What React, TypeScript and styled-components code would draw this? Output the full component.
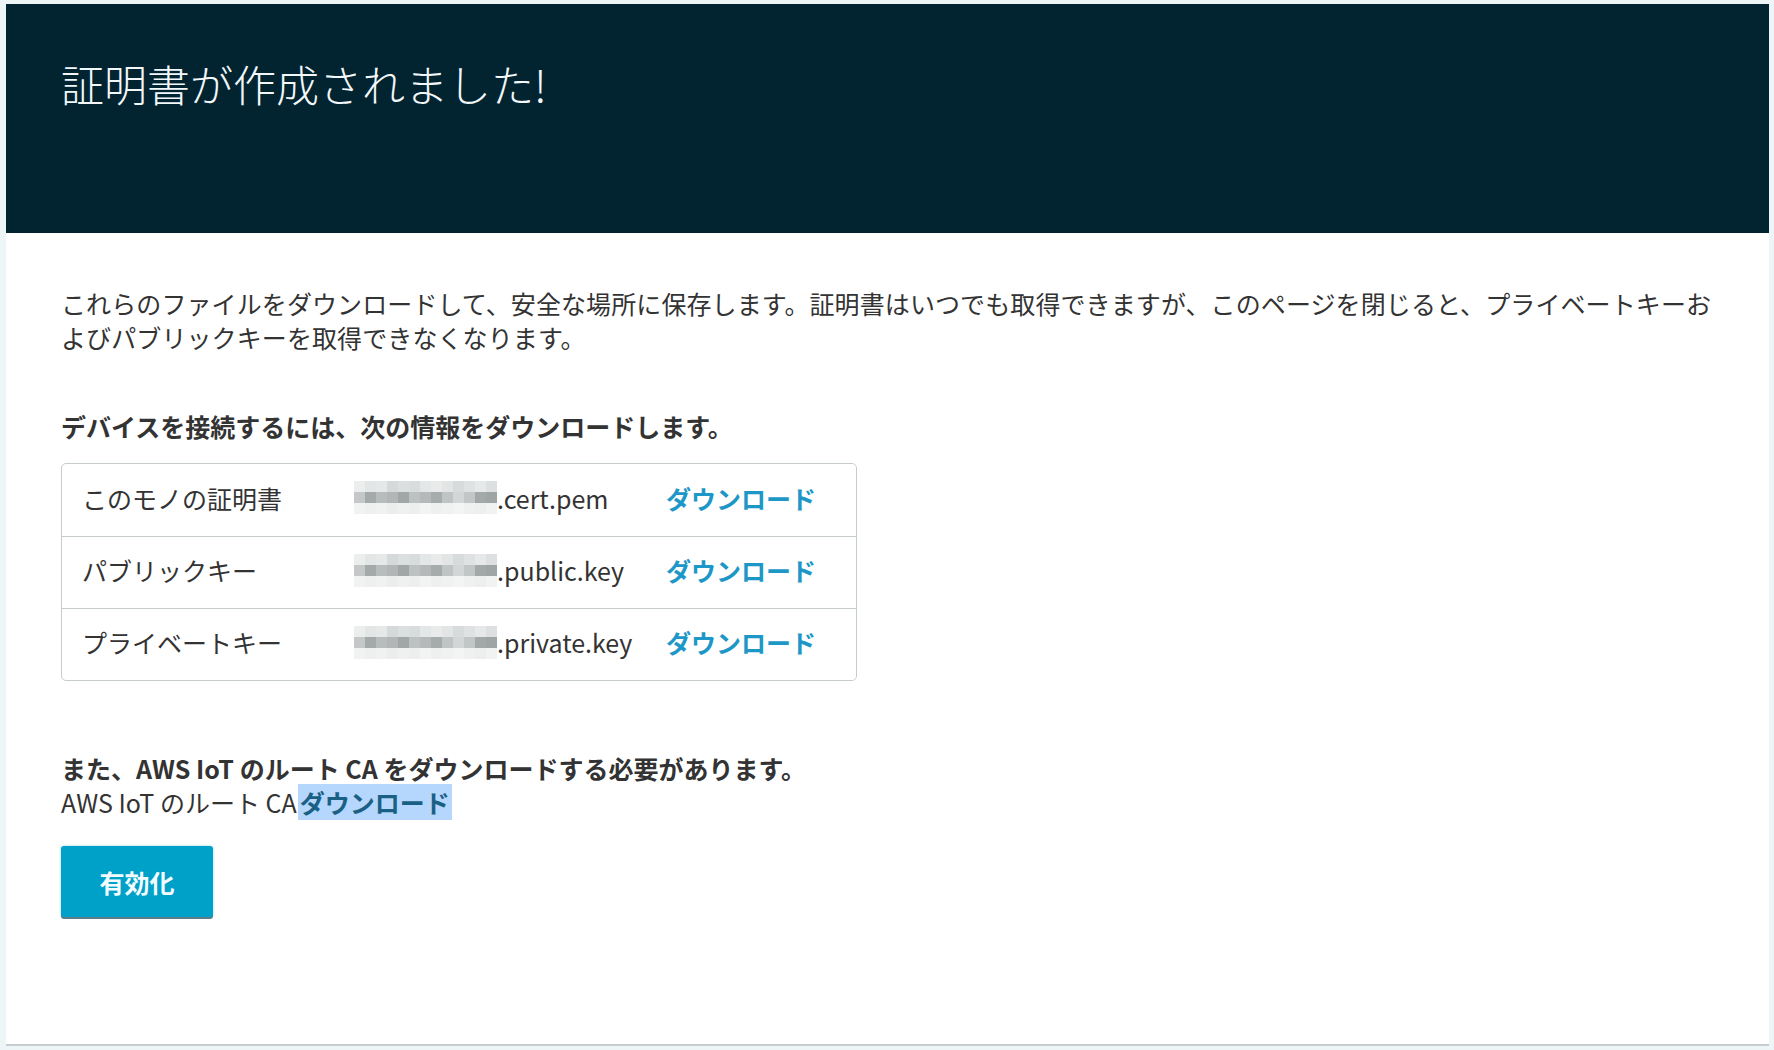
import styled, { createGlobalStyle } from 'styled-components';

const GlobalStyle = createGlobalStyle`
  html, body {
    margin: 0;
    padding: 0;
    background: #eef5f6;
  }
  body {
    font-family: "Noto Sans CJK JP", "Noto Sans", sans-serif;
    color: #333;
  }
`;

const Page = styled.div`
  padding: 4px 5px 0 6px;
`;

const Card = styled.div`
  background: #fff;
  border-bottom: 2px solid #c5cdce;
`;

const Header = styled.header`
  background: #022431;
  height: 229px;
  box-sizing: border-box;
  padding: 54px 55px 0;
`;

const Title = styled.h1`
  margin: 0;
  color: #f2f8fa;
  font-size: 43px;
  font-weight: 300;
  line-height: 50px;
`;

const Body = styled.div`
  padding: 53px 55px 127px;
  font-size: 25px;
  line-height: 34px;
`;

const Paragraph = styled.p`
  margin: 0;
  letter-spacing: 0.1px;
`;

const Heading = styled.p`
  margin: 55px 0 20px;
  font-weight: 700;
`;

const FileTable = styled.div`
  width: 794px;
  border: 1px solid #c6cbcd;
  border-radius: 5px;
`;

const FileRow = styled.div`
  display: grid;
  grid-template-columns: 272px 312px 1fr;
  align-items: center;
  height: 72px;
  box-sizing: border-box;
  padding: 0 0 5px 20px;
  & + & {
    border-top: 1px solid #c6cbcd;
  }
`;

const FileName = styled.div`
  display: flex;
  align-items: center;
`;

const Link = styled.a`
  color: #1c97c6;
  font-weight: 700;
  text-decoration: none;
  cursor: pointer;
`;

const SelectedLink = styled(Link)`
  color: #1a5f84;
  background: #b5d6fd;
  padding: 0 2px;
  margin-left: 1px;
`;

const Note = styled.p`
  margin: 70px 0 0;
  font-weight: 700;
`;

const CaLine = styled.p`
  margin: 0;
`;

const Button = styled.button`
  margin-top: 27px;
  width: 152px;
  height: 71px;
  border: none;
  border-radius: 3px;
  background: #00a1c9;
  box-shadow: 0 2px 0 #5b7c88, 0 0 3px rgba(0, 161, 201, 0.4);
  color: #f4fcff;
  font-family: inherit;
  font-size: 25px;
  font-weight: 700;
  cursor: pointer;
`;

const shades = [
  ['#eceeee', '#e3e6e6', '#e6e8e8', '#d6d9d9', '#dcdfdf', '#d9dcdc', '#e4e7e7', '#e9ebeb', '#e2e5e5', '#d8dbdb', '#dfe2e2', '#e7e9e9', '#dde0e0'],
  ['#c4c8c9', '#a4a9aa', '#b8bcbd', '#b2b6b7', '#a1a6a7', '#bdc1c2', '#b5b9ba', '#a6abac', '#c0c4c5', '#d3d6d6', '#c2c6c7', '#a3a8a9', '#9fa4a5'],
  ['#f1f3f3', '#eef0f0', '#f0f2f2', '#eceeee', '#eff1f1', '#edefef', '#f2f3f3', '#eef0f0', '#f0f2f2', '#f3f4f4', '#eff1f1', '#edefef', '#f1f3f3'],
];

function Mosaic() {
  const cell = 11;
  return (
    <svg width={cell * 13} height={33} style={{ display: 'block', flexShrink: 0 }}>
      {shades.map((row, r) =>
        row.map((c, i) => <rect key={`${r}-${i}`} x={i * cell} y={r * cell} width={cell} height={cell} fill={c} />)
      )}
    </svg>
  );
}

const files = [
  { label: 'このモノの証明書', ext: '.cert.pem' },
  { label: 'パブリックキー', ext: '.public.key' },
  { label: 'プライベートキー', ext: '.private.key' },
];

export default function App() {
  return (
    <Page>
      <GlobalStyle />
      <Card>
        <Header>
          <Title>証明書が作成されました!</Title>
        </Header>
        <Body>
          <Paragraph>
            これらのファイルをダウンロードして、安全な場所に保存します。証明書はいつでも取得できますが、このページを閉じると、プライベートキーおよびパブリックキーを取得できなくなります。
          </Paragraph>
          <Heading>デバイスを接続するには、次の情報をダウンロードします。</Heading>
          <FileTable>
            {files.map((f) => (
              <FileRow key={f.ext}>
                <span>{f.label}</span>
                <FileName>
                  <Mosaic />
                  <span>{f.ext}</span>
                </FileName>
                <Link>ダウンロード</Link>
              </FileRow>
            ))}
          </FileTable>
          <Note>また、AWS IoT のルート CA をダウンロードする必要があります。</Note>
          <CaLine>
            AWS IoT のルート CA<SelectedLink>ダウンロード</SelectedLink>
          </CaLine>
          <Button>有効化</Button>
        </Body>
      </Card>
    </Page>
  );
}
